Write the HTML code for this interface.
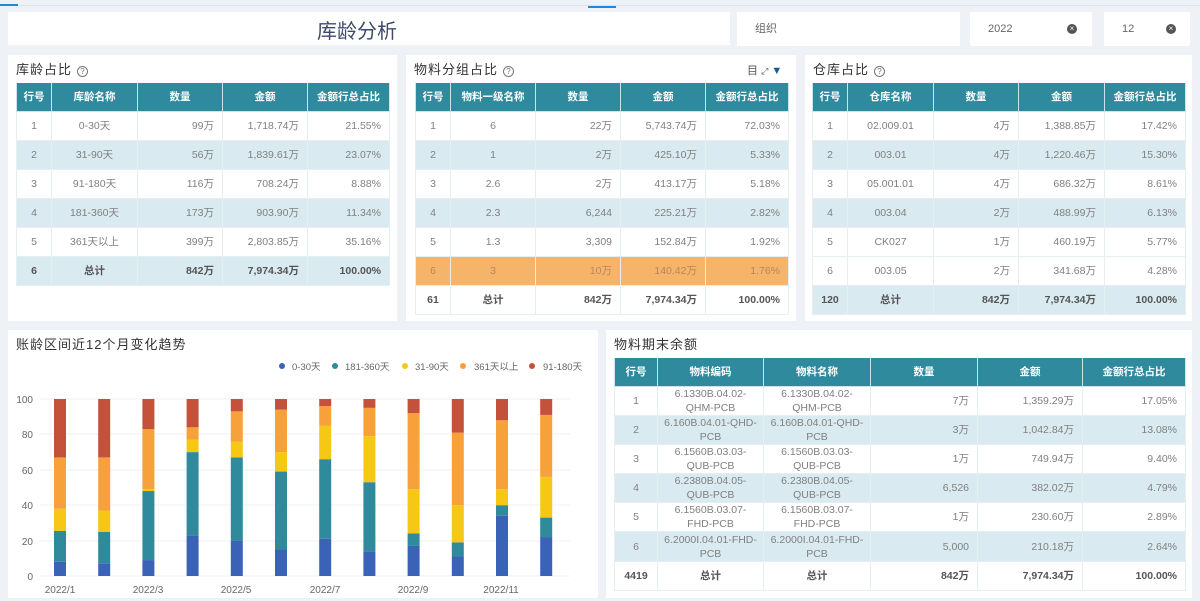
<!DOCTYPE html>
<html><head><meta charset="utf-8"><style>
*{margin:0;padding:0;box-sizing:border-box}
body{width:1200px;height:601px;background:#eef2f7;font-family:"Liberation Sans","Noto Sans CJK SC",sans-serif;position:relative;overflow:hidden;color:#666}
.card{position:absolute;background:#fff}
.t{position:absolute;font-size:13px;color:#333;letter-spacing:1px;line-height:16px}
.q{display:inline-block;width:11px;height:11px;border:1px solid #777;border-radius:50%;font-size:8px;text-align:center;line-height:9px;color:#777;margin-left:5px;vertical-align:0px;letter-spacing:0}
table{position:absolute;border-collapse:collapse;font-size:10.5px;table-layout:fixed}
th{background:#2f8a9e;color:#fff;font-weight:bold;height:28px;border:1px solid #cde3ea;border-top:none}
td{height:29px;border:1px solid #e6eef2;color:#808080;text-align:right;padding-right:8px}
td.c{text-align:center;padding:0}
tr.a td{background:#d9eaf1}
tr.o td{background:#f6b46a;color:#b8865a}
tr.s td{font-weight:bold;color:#555}
.sel{position:absolute;background:#fff;font-size:11px;color:#666;padding-left:18px;line-height:34px}
.x{position:absolute;top:12px;width:10px;height:10px;border-radius:50%;background:#555;color:#fff;font-size:8px;line-height:10px;text-align:center}
</style></head><body>
<div style="position:absolute;left:0;top:5px;width:1200px;height:1px;background:#dde3ea"></div>
<div style="position:absolute;left:0;top:4px;width:18px;height:2px;background:#1e88d8"></div>
<div style="position:absolute;left:588px;top:6px;width:28px;height:2px;background:#1e88d8"></div>
<div class="card" style="left:8px;top:12px;width:722px;height:33px"><div style="position:absolute;left:0;width:100%;text-align:center;top:3px;font-size:20px;color:#3d4b6a"><span style="position:relative;left:-12px">库龄分析</span></div></div>
<div class="sel" style="left:737px;top:12px;width:223px;height:34px">组织</div>
<div class="sel" style="left:970px;top:12px;width:122px;height:34px">2022<span class="x" style="left:97px">×</span></div>
<div class="sel" style="left:1104px;top:12px;width:86px;height:34px">12<span class="x" style="left:62px">×</span></div>

<div class="card" style="left:8px;top:55px;width:389px;height:266px"></div>
<div class="card" style="left:406px;top:55px;width:390px;height:266px"></div>
<div class="card" style="left:805px;top:55px;width:387px;height:266px"></div>
<div class="card" style="left:8px;top:330px;width:590px;height:268px"></div>
<div class="card" style="left:606px;top:330px;width:586px;height:268px"></div>

<div class="t" style="left:16px;top:62px">库龄占比<span class="q">?</span></div>
<table style="left:16px;top:83px;width:373px">
<colgroup><col style="width:35px"><col style="width:86px"><col style="width:85px"><col style="width:85px"><col style="width:82px"></colgroup>
<tr><th>行号</th><th>库龄名称</th><th>数量</th><th>金额</th><th>金额行总占比</th></tr>
<tr><td class="c">1</td><td class="c">0-30天</td><td>99万</td><td>1,718.74万</td><td>21.55%</td></tr>
<tr class="a"><td class="c">2</td><td class="c">31-90天</td><td>56万</td><td>1,839.61万</td><td>23.07%</td></tr>
<tr><td class="c">3</td><td class="c">91-180天</td><td>116万</td><td>708.24万</td><td>8.88%</td></tr>
<tr class="a"><td class="c">4</td><td class="c">181-360天</td><td>173万</td><td>903.90万</td><td>11.34%</td></tr>
<tr><td class="c">5</td><td class="c">361天以上</td><td>399万</td><td>2,803.85万</td><td>35.16%</td></tr>
<tr class="a s"><td class="c">6</td><td class="c">总计</td><td>842万</td><td>7,974.34万</td><td>100.00%</td></tr>
</table>

<div class="t" style="left:414px;top:62px">物料分组占比<span class="q">?</span></div>
<div style="position:absolute;left:747px;top:62px;font-size:11px;color:#555">目 <span style="font-size:9px">⤢</span> <span style="color:#1f5a8a">▼</span></div>
<table style="left:415px;top:83px;width:373px">
<colgroup><col style="width:35px"><col style="width:85px"><col style="width:85px"><col style="width:85px"><col style="width:83px"></colgroup>
<tr><th>行号</th><th>物料一级名称</th><th>数量</th><th>金额</th><th>金额行总占比</th></tr>
<tr><td class="c">1</td><td class="c">6</td><td>22万</td><td>5,743.74万</td><td>72.03%</td></tr>
<tr class="a"><td class="c">2</td><td class="c">1</td><td>2万</td><td>425.10万</td><td>5.33%</td></tr>
<tr><td class="c">3</td><td class="c">2.6</td><td>2万</td><td>413.17万</td><td>5.18%</td></tr>
<tr class="a"><td class="c">4</td><td class="c">2.3</td><td>6,244</td><td>225.21万</td><td>2.82%</td></tr>
<tr><td class="c">5</td><td class="c">1.3</td><td>3,309</td><td>152.84万</td><td>1.92%</td></tr>
<tr class="o"><td class="c">6</td><td class="c">3</td><td>10万</td><td>140.42万</td><td>1.76%</td></tr>
<tr class="s"><td class="c">61</td><td class="c">总计</td><td>842万</td><td>7,974.34万</td><td>100.00%</td></tr>
</table>

<div class="t" style="left:813px;top:62px">仓库占比<span class="q">?</span></div>
<table style="left:812px;top:83px;width:373px">
<colgroup><col style="width:35px"><col style="width:86px"><col style="width:85px"><col style="width:86px"><col style="width:81px"></colgroup>
<tr><th>行号</th><th>仓库名称</th><th>数量</th><th>金额</th><th>金额行总占比</th></tr>
<tr><td class="c">1</td><td class="c">02.009.01</td><td>4万</td><td>1,388.85万</td><td>17.42%</td></tr>
<tr class="a"><td class="c">2</td><td class="c">003.01</td><td>4万</td><td>1,220.46万</td><td>15.30%</td></tr>
<tr><td class="c">3</td><td class="c">05.001.01</td><td>4万</td><td>686.32万</td><td>8.61%</td></tr>
<tr class="a"><td class="c">4</td><td class="c">003.04</td><td>2万</td><td>488.99万</td><td>6.13%</td></tr>
<tr><td class="c">5</td><td class="c">CK027</td><td>1万</td><td>460.19万</td><td>5.77%</td></tr>
<tr><td class="c">6</td><td class="c">003.05</td><td>2万</td><td>341.68万</td><td>4.28%</td></tr>
<tr class="a s"><td class="c">120</td><td class="c">总计</td><td>842万</td><td>7,974.34万</td><td>100.00%</td></tr>
</table>

<div class="t" style="left:16px;top:337px">账龄区间近12个月变化趋势</div>
<svg style="position:absolute;left:0;top:330px" width="600" height="270" font-family="Liberation Sans,Noto Sans CJK SC,sans-serif" font-size="10" fill="#666">
<g font-size="9.5">
<circle cx="282" cy="36" r="3" fill="#3a63b8"/><text x="292" y="40">0-30天</text>
<circle cx="335" cy="36" r="3" fill="#2f8b9c"/><text x="345" y="40">181-360天</text>
<circle cx="405" cy="36" r="3" fill="#f7c716"/><text x="415" y="40">31-90天</text>
<circle cx="463" cy="36" r="3" fill="#f7a13a"/><text x="474" y="40">361天以上</text>
<circle cx="532" cy="36" r="3" fill="#c4513a"/><text x="543" y="40">91-180天</text>
</g>
<g stroke="#eef0f3"><line x1="40" x2="570" y1="69" y2="69"/><line x1="40" x2="570" y1="104" y2="104"/><line x1="40" x2="570" y1="140" y2="140"/><line x1="40" x2="570" y1="175" y2="175"/><line x1="40" x2="570" y1="211" y2="211"/><line x1="40" x2="570" y1="246" y2="246"/></g>
<g text-anchor="end"><text x="33" y="73">100</text><text x="33" y="108">80</text><text x="33" y="144">60</text><text x="33" y="179">40</text><text x="33" y="215">20</text><text x="33" y="250">0</text></g>
<g text-anchor="middle"><text x="60" y="263">2022/1</text><text x="148" y="263">2022/3</text><text x="236" y="263">2022/5</text><text x="325" y="263">2022/7</text><text x="413" y="263">2022/9</text><text x="501" y="263">2022/11</text></g>
<g transform="translate(0,246) scale(1,-1.77)" id="bars"></g>
</svg>
<script>
var d=[[8,25.5,38,67],[7,25,37,67],[9,48,49,83],[23,70,77,84],[20,67,76,93],[15,59,70,94],[21,66,85,96],[14,53,79,95],[17,24,49,92],[11,19,40,81],[34,40,49,88],[22,33,56,91]];
var c=["#3a63b8","#2f8b9c","#f7c716","#f7a13a","#c4513a"],s="";
d.forEach(function(r,i){var x=54+i*44.2,p=0;r.concat([100]).forEach(function(v,k){s+='<rect x="'+x+'" y="'+p+'" width="12" height="'+(v-p)+'" fill="'+c[k]+'"/>';p=v;});});
document.getElementById("bars").innerHTML=s;
</script>

<div class="t" style="left:614px;top:337px">物料期末余额</div>
<table style="left:614px;top:358px;width:571px">
<colgroup><col style="width:43px"><col style="width:106px"><col style="width:107px"><col style="width:107px"><col style="width:105px"><col style="width:103px"></colgroup>
<tr><th>行号</th><th>物料编码</th><th>物料名称</th><th>数量</th><th>金额</th><th>金额行总占比</th></tr>
<tr><td class="c">1</td><td class="c">6.1330B.04.02-<br>QHM-PCB</td><td class="c">6.1330B.04.02-<br>QHM-PCB</td><td>7万</td><td>1,359.29万</td><td>17.05%</td></tr>
<tr class="a"><td class="c">2</td><td class="c">6.160B.04.01-QHD-<br>PCB</td><td class="c">6.160B.04.01-QHD-<br>PCB</td><td>3万</td><td>1,042.84万</td><td>13.08%</td></tr>
<tr><td class="c">3</td><td class="c">6.1560B.03.03-<br>QUB-PCB</td><td class="c">6.1560B.03.03-<br>QUB-PCB</td><td>1万</td><td>749.94万</td><td>9.40%</td></tr>
<tr class="a"><td class="c">4</td><td class="c">6.2380B.04.05-<br>QUB-PCB</td><td class="c">6.2380B.04.05-<br>QUB-PCB</td><td>6,526</td><td>382.02万</td><td>4.79%</td></tr>
<tr><td class="c">5</td><td class="c">6.1560B.03.07-<br>FHD-PCB</td><td class="c">6.1560B.03.07-<br>FHD-PCB</td><td>1万</td><td>230.60万</td><td>2.89%</td></tr>
<tr class="a"><td class="c">6</td><td class="c">6.2000I.04.01-FHD-<br>PCB</td><td class="c">6.2000I.04.01-FHD-<br>PCB</td><td>5,000</td><td>210.18万</td><td>2.64%</td></tr>
<tr class="s"><td class="c">4419</td><td class="c">总计</td><td class="c">总计</td><td>842万</td><td>7,974.34万</td><td>100.00%</td></tr>
</table>
<style>table[style*="571px"] td{height:29.2px;line-height:14px}</style>
</body></html>
